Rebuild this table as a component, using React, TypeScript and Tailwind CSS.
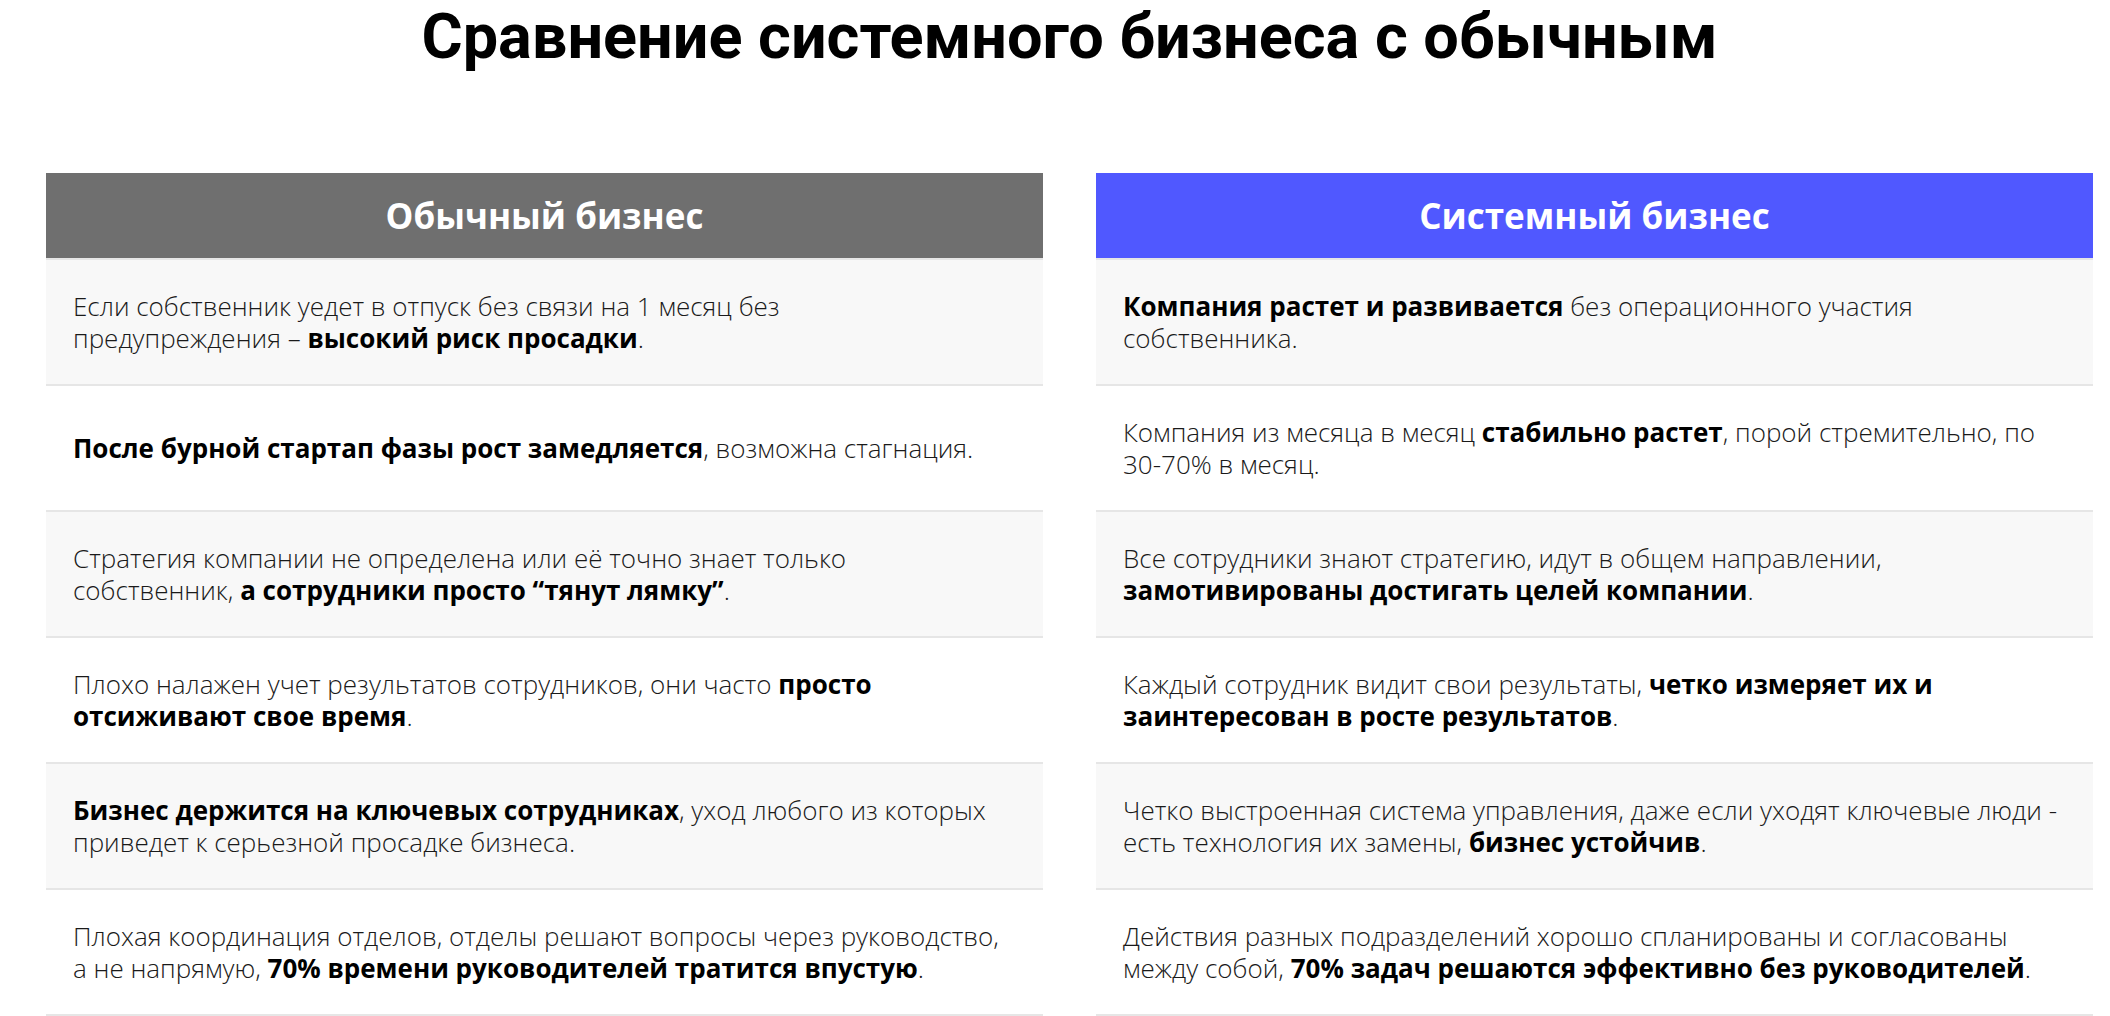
import React from 'react';

type Row = React.ReactNode;

const plain: Row[] = [
  <>Если собственник уедет в отпуск без связи на 1 месяц без<br />предупреждения – <b>высокий риск просадки</b>.</>,
  <><b>После бурной стартап фазы рост замедляется</b>, возможна стагнация.</>,
  <>Стратегия компании не определена или её точно знает только<br />собственник, <b>а сотрудники просто “тянут лямку”</b>.</>,
  <>Плохо налажен учет результатов сотрудников, они часто <b>просто<br />отсиживают свое время</b>.</>,
  <><b>Бизнес держится на ключевых сотрудниках</b>, уход любого из которых<br />приведет к серьезной просадке бизнеса.</>,
  <>Плохая координация отделов, отделы решают вопросы через руководство,<br />а не напрямую, <b>70% времени руководителей тратится впустую</b>.</>,
];

const system: Row[] = [
  <><b>Компания растет и развивается</b> без операционного участия<br />собственника.</>,
  <>Компания из месяца в месяц <b>стабильно растет</b>, порой стремительно, по<br />30-70% в месяц.</>,
  <>Все сотрудники знают стратегию, идут в общем направлении,<br /><b>замотивированы достигать целей компании</b>.</>,
  <>Каждый сотрудник видит свои результаты, <b>четко измеряет их и<br />заинтересован в росте результатов</b>.</>,
  <>Четко выстроенная система управления, даже если уходят ключевые люди -<br />есть технология их замены, <b>бизнес устойчив</b>.</>,
  <>Действия разных подразделений хорошо спланированы и согласованы<br />между собой, <b>70% задач решаются эффективно без руководителей</b>.</>,
];

function Column({ title, color, rows }: { title: string; color: string; rows: Row[] }) {
  return (
    <div className="flex flex-col">
      <div className={`h-[87px] flex items-center justify-center border-b-2 border-[#e6e6e6] ${color}`}>
        <span className="text-white font-bold text-[35px] leading-none">{title}</span>
      </div>
      {rows.map((r, i) => (
        <div
          key={i}
          className={`h-[126px] border-b-2 border-[#e6e6e6] px-[27px] flex items-center ${i % 2 === 0 ? 'bg-[#f8f8f8]' : 'bg-white'}`}
        >
          <p className="text-[26px] leading-[32px] font-light text-[#1a1a1a] [&_b]:font-bold [&_b]:text-black">{r}</p>
        </div>
      ))}
    </div>
  );
}

export default function App() {
  return (
    <div className="min-h-screen bg-white" style={{ fontFamily: '"Open Sans", sans-serif' }}>
      <div className="ml-[46px] w-[2047px]">
        <h1
          className="text-center text-[63px] leading-[74px] font-bold text-black"
          style={{ fontFamily: 'Roboto, sans-serif' }}
        >
          Сравнение системного бизнеса с обычным
        </h1>
        <div className="mt-[99px] grid grid-cols-2 gap-x-[53px]">
          <Column title="Обычный бизнес" color="bg-[#6f6f6f]" rows={plain} />
          <Column title="Системный бизнес" color="bg-[#5058ff]" rows={system} />
        </div>
      </div>
    </div>
  );
}
